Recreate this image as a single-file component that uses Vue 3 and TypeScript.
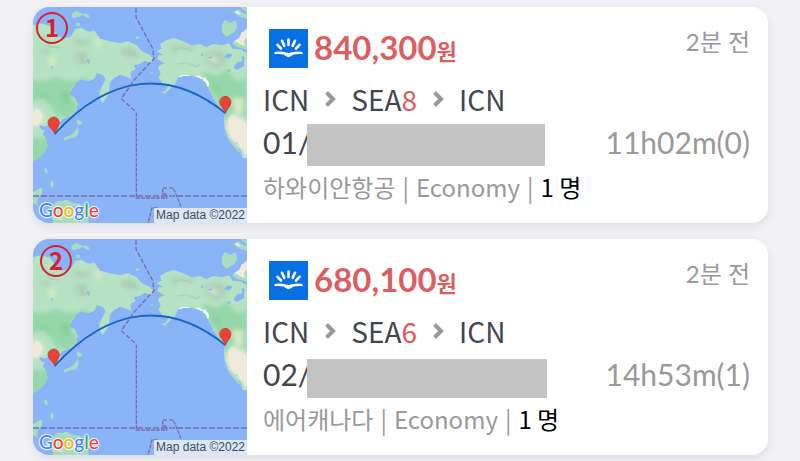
<script setup lang="ts">
interface Fare {
  id: number
  price: string
  month: string
  day: string
  code: string
  airline: string
  cabin: string
  people: string
  duration: string
  age: string
}

const fares: Fare[] = [
  { id: 1, price: '840,300', month: '8', day: '01/', code: '1', airline: '하와이안항공', cabin: 'Economy', people: '1 명', duration: '11h02m(0)', age: '2분 전' },
  { id: 2, price: '680,100', month: '6', day: '02/', code: '2', airline: '에어캐나다', cabin: 'Economy', people: '1 명', duration: '14h53m(1)', age: '2분 전' },
]
</script>

<template>
  <main class="list">
    <article v-for="fare in fares" :key="fare.id" class="card">
      <div class="map">
        <svg class="map-art" viewBox="39 27 642 648" preserveAspectRatio="xMidYMid slice" aria-hidden="true">
          <defs>
            <filter :id="`soft${fare.id}`" x="-5%" y="-5%" width="110%" height="110%"><feGaussianBlur stdDeviation="6" /></filter>
            <clipPath :id="`land${fare.id}`">
              <path d="M39 82L62 76 90 84 112 112 130 122 152 116 166 92 184 90 208 101 224 98 240 122 268 130 302 136 322 130 350 142 366 160 388 170 402 184 392 194 374 188 358 198 342 202 346 214 332 222 334 242 318 236 300 230 282 240 270 252 268 276 260 298 248 316 240 304 238 280 248 262 256 244 248 230 230 226 224 242 204 250 184 244 166 256 156 274 148 290 164 298 174 318 168 340 150 356 126 364 118 374 124 392 114 406 104 404 100 386 86 382 72 386 62 380 58 390 74 398 68 408 80 424 82 446 70 466 56 480 39 490Z" />
              <path d="M420 138L440 126 462 120 490 130 516 142 540 138 558 148 580 138 606 142 626 136 638 152 660 154 681 166V480L668 478 650 444 630 428 614 392 612 362 616 344 594 322 578 298 566 270 548 244 522 234 490 234 472 240 466 258 448 274 430 286 446 264 426 254 416 240 422 224 414 212 418 202 434 196 412 184 416 172 430 172 410 160 424 152Z" />
            </clipPath>
          </defs>
          <path fill="#8ab4f8" d="M39 27H681V675H39Z" />
          <g :clip-path="`url(#land${fare.id})`">
            <path fill="#b5e2c3" d="M39 27H681V675H39Z" />
            <g :filter="`url(#soft${fare.id})`">
              <path fill="#94d7a9" d="M30 245L70 250 110 238 150 250 200 240 210 256 170 262 140 300 180 320 150 365 110 350 70 300 30 310ZM30 420L90 420 80 480 30 500ZM550 220L590 235 620 215 650 250 681 240V360L640 340 612 375 590 310 560 265Z" />
              <path fill="#e9e8d8" d="M30 340L50 325 68 345 72 370 55 385 30 385ZM625 355L650 350 690 380V500L660 455 635 425 618 390Z" />
              <path fill="#aed0b8" d="M165 120L215 128 200 142 160 138ZM160 165L200 160 200 195 175 200ZM300 160L330 145 360 168 350 182 310 174ZM450 142L520 140 530 156 480 150 455 164ZM550 165L605 155 625 190 590 212 560 200ZM40 160L90 150 90 170Z" />
              <path fill="#d4e9c4" d="M85 175H105V205H85ZM225 120H245V150H225ZM560 170L585 178 600 194 570 190ZM635 300H670V345H645Z" />
              <path fill="#84d29b" d="M120 280L150 280 155 310 125 320ZM580 250L600 260 605 295 584 280ZM55 280L85 285 85 300 55 298Z" />
            </g>
            <path fill="none" stroke="#fafcf9" stroke-width="7" stroke-linecap="round" d="M482 236L502 234 512 240M522 238L538 236 548 246 554 242 564 256 562 266" />
            <path fill="none" stroke="#acd0b8" stroke-width="4" d="M70 112L88 146 120 150M180 172L192 194 212 184M310 156L332 172 348 168M460 160L480 148 514 158M470 198L500 194 530 206 540 196" />
            <path fill="#8ab4f8" d="M612 178L624 166 638 170 628 182ZM640 208L652 192 666 190 664 174 674 176 672 204 650 216ZM620 216L632 214 626 222ZM564 178L578 174 572 182ZM540 170L550 166 548 174ZM200 186L206 184 210 198 204 196ZM92 214L96 202 98 210Z" />
          </g>
          <g fill="#a9dcbc">
            <path d="M154 48L168 38 186 46 204 48 210 60 198 58 188 50 178 56 158 60ZM168 76L178 74 180 84 170 84ZM346 118L354 114 360 120 350 124ZM606 82L614 66 630 74 648 66 652 86 644 102 620 116 606 104ZM640 42L656 34 666 44 681 48V62L660 56ZM660 28L681 28V42ZM636 136L652 126 660 114 676 108 674 94 681 90V156L664 150 650 146Z" />
            <path d="M171 362L180 370 188 370 184 380 172 380ZM174 384L176 404 168 418 144 422 136 418 154 410 166 400ZM132 418L144 422 138 428 130 424ZM74 508L82 514 82 528 74 522ZM92 546L102 556 98 570 92 564ZM39 582L66 568 66 586 54 600 50 622 39 614ZM110 610L142 606 160 616 184 618 184 626 150 624 170 638 204 656 206 675H100L96 650 76 646Z" />
            <path d="M610 396L626 418 644 436 660 456 668 474 654 460 630 432ZM422 282L448 274 434 288ZM388 222L402 224 396 228Z" />
          </g>
          <path fill="#f0eadc" d="M642 130L660 118 664 104 681 94V118L672 128 676 144 662 140 654 134ZM626 362L638 352 654 362 681 380V464L668 446 660 452 650 430 634 420 624 392ZM39 342L56 334 66 350 60 370 50 382H39ZM646 38L654 40 662 50 650 48Z" />
          <path fill="#8ab4f8" d="M646 432L656 440 672 470 676 486 662 464Z" />
          <path fill="none" stroke="#c6e5d5" stroke-width="7" d="M650 438L666 456 674 480M98 660L108 656 116 662 130 664" />
          <g fill="none" stroke="#796caa" stroke-width="4">
            <path stroke-dasharray="14 6" d="M348 30V57L398 152 402 182 344 244 304 302 348 342" />
            <path stroke-dasharray="12 3" d="M349 344V600H440V588H428V570H440M448 570H460L484 628M412 630H396L384 675" />
            <path stroke-dasharray="18 6" d="M39 594H681" />
          </g>
          <path fill="none" stroke="#1964cb" stroke-width="6" d="M104 408C270 226 450 212 616 345" />
          <g fill="#ea4335" stroke="#c13a36" stroke-width="2">
            <path d="M104 408C102 396 84 388 84 374A17 17 0 0 1 118 374C118 388 106 396 104 408Z" />
            <path d="M617 346C615 334 599 326 599 312A17 17 0 0 1 633 312C633 326 619 334 617 346Z" />
          </g>
        </svg>
        <span class="badge" :class="`badge-${fare.code}`">{{ fare.code }}</span>
        <div class="map-foot">
          <span class="google"><i class="b">G</i><i class="r">o</i><i class="y">o</i><i class="b">g</i><i class="g">l</i><i class="r">e</i></span>
          <span class="credit">Map data ©2022</span>
        </div>
      </div>

      <div class="info">
        <header class="top">
          <svg class="logo" viewBox="0 0 39 39" aria-hidden="true">
            <path fill="#0770e3" d="M0 0H39V39H0Z" />
            <g stroke="#fff" stroke-width="2.6" stroke-linecap="round">
              <path d="M19.500 10.500V16M13 11.800L15.300 16.900M26 11.800L23.700 16.900M8.500 15.800L12 19.500M30.500 15.800L27 19.500" />
            </g>
            <path fill="#fff" d="M5.800 23.100C9.500 22 13.500 22.500 17 23.600Q19.500 24.500 22 23.600C25.500 22.500 29.500 22 33.200 23.100Q34.300 24.300 33.200 25.200C30 24.700 27 24.800 24.500 25.600Q21 28.200 19.500 28.200Q18 28.200 14.500 25.600C12 24.800 9 24.700 5.800 25.200Q4.700 24.300 5.800 23.100Z" />
          </svg>
          <strong class="price">{{ fare.price }}<small>원</small></strong>
          <span class="age">{{ fare.age }}</span>
        </header>
        <div class="route">
          <span>ICN</span>
          <svg class="chevron" viewBox="0 0 12 18" aria-hidden="true"><path d="M2.500 2.500L9 9L2.500 15.500" /></svg>
          <span>SEA<em>{{ fare.month }}</em></span>
          <svg class="chevron" viewBox="0 0 12 18" aria-hidden="true"><path d="M2.500 2.500L9 9L2.500 15.500" /></svg>
          <span>ICN</span>
        </div>
        <div class="dates">
          <span class="day">{{ fare.day }}</span>
          <span class="mask" :class="`mask-${fare.code}`"></span>
          <span class="duration">{{ fare.duration }}</span>
        </div>
        <p class="detail">
          <span>{{ fare.airline }}</span><span>|</span><span>{{ fare.cabin }}</span><span>|</span><b>{{ fare.people }}</b>
        </p>
      </div>
    </article>
  </main>
</template>

<style>
body {
  margin: 0;
  background: #f0f0f5;
}
</style>

<style scoped>
.list {
  display: flex;
  flex-direction: column;
  gap: 16px;
  padding: 7px 32px 6px 33px;
  font-family: Lato, "Noto Sans CJK KR", sans-serif;
  color: #42464d;
}
.card {
  display: flex;
  overflow: hidden;
  border-radius: 16px;
  background: #fff;
  box-shadow: 0 3px 8px rgba(40, 40, 60, 0.09);
}
.map {
  position: relative;
  flex: 0 0 214px;
  display: flex;
  flex-direction: column;
  justify-content: flex-end;
}
.map-art {
  position: absolute;
  inset: 0;
  width: 100%;
  height: 100%;
}
.badge {
  position: absolute;
  box-sizing: border-box;
  width: 32px;
  height: 32px;
  border: 2px solid #d9202b;
  border-radius: 50%;
  color: #d9202b;
  font: bold 24px/26px "Noto Sans CJK KR", sans-serif;
  text-align: center;
}
.badge-1 {
  top: 5px;
  left: 3px;
}
.badge-2 {
  top: 6px;
  left: 7px;
}
.map-foot {
  position: relative;
  display: flex;
  justify-content: space-between;
  align-items: flex-end;
}
.google {
  padding-left: 6px;
  font: 500 19px/26px Lato, sans-serif;
  text-shadow: 1px 0 1px #fff, -1px 0 1px #fff, 0 1px 1px #fff, 0 -1px 1px #fff;
}
.google i {
  font-style: normal;
}
.b { color: #4285f4; }
.r { color: #ea4335; }
.y { color: #f4b400; }
.g { color: #34a853; }
.credit {
  padding: 0 2px;
  background: rgba(232, 240, 250, 0.85);
  color: #454a52;
  font: 12px/15px "Liberation Sans", sans-serif;
}
.info {
  flex: 1;
  min-width: 0;
  padding: 22px 18px 18px 16px;
}
.top {
  display: flex;
  align-items: center;
  height: 39px;
  padding-left: 6px;
}
.logo {
  width: 39px;
  height: 39px;
  margin-right: 6px;
}
.price {
  padding-top: 2px;
  color: #db5f5f;
  font-size: 33px;
  line-height: 39px;
}
.price small {
  font-size: 22px;
}
.age {
  align-self: flex-start;
  margin-left: auto;
  color: #999;
  font-size: 24px;
  line-height: 26px;
}
.route {
  display: flex;
  align-items: center;
  gap: 15px;
  margin-top: 12px;
  font: 28px/38px "Noto Sans CJK KR", sans-serif;
}
.route em {
  color: #e05a5a;
  font-style: normal;
}
.chevron {
  width: 12px;
  height: 18px;
  fill: none;
  stroke: #999;
  stroke-width: 4;
}
.dates {
  display: flex;
  align-items: flex-start;
  height: 42px;
  margin-top: 6px;
  font-size: 30px;
  line-height: 36px;
}
.mask {
  flex: 0 1 238px;
  height: 42px;
  margin-left: -4px;
  background: #c3c3c3;
}
.mask-2 {
  flex-basis: 240px;
  height: 39px;
  margin-top: 3px;
}
.duration {
  margin-left: auto;
  color: #999;
}
.detail {
  display: flex;
  gap: 7px;
  margin: 3px 0 0;
  color: #999;
  font: 24px/36px "Noto Sans CJK KR", sans-serif;
}
.detail b {
  color: #000;
  font-weight: 400;
}
</style>
